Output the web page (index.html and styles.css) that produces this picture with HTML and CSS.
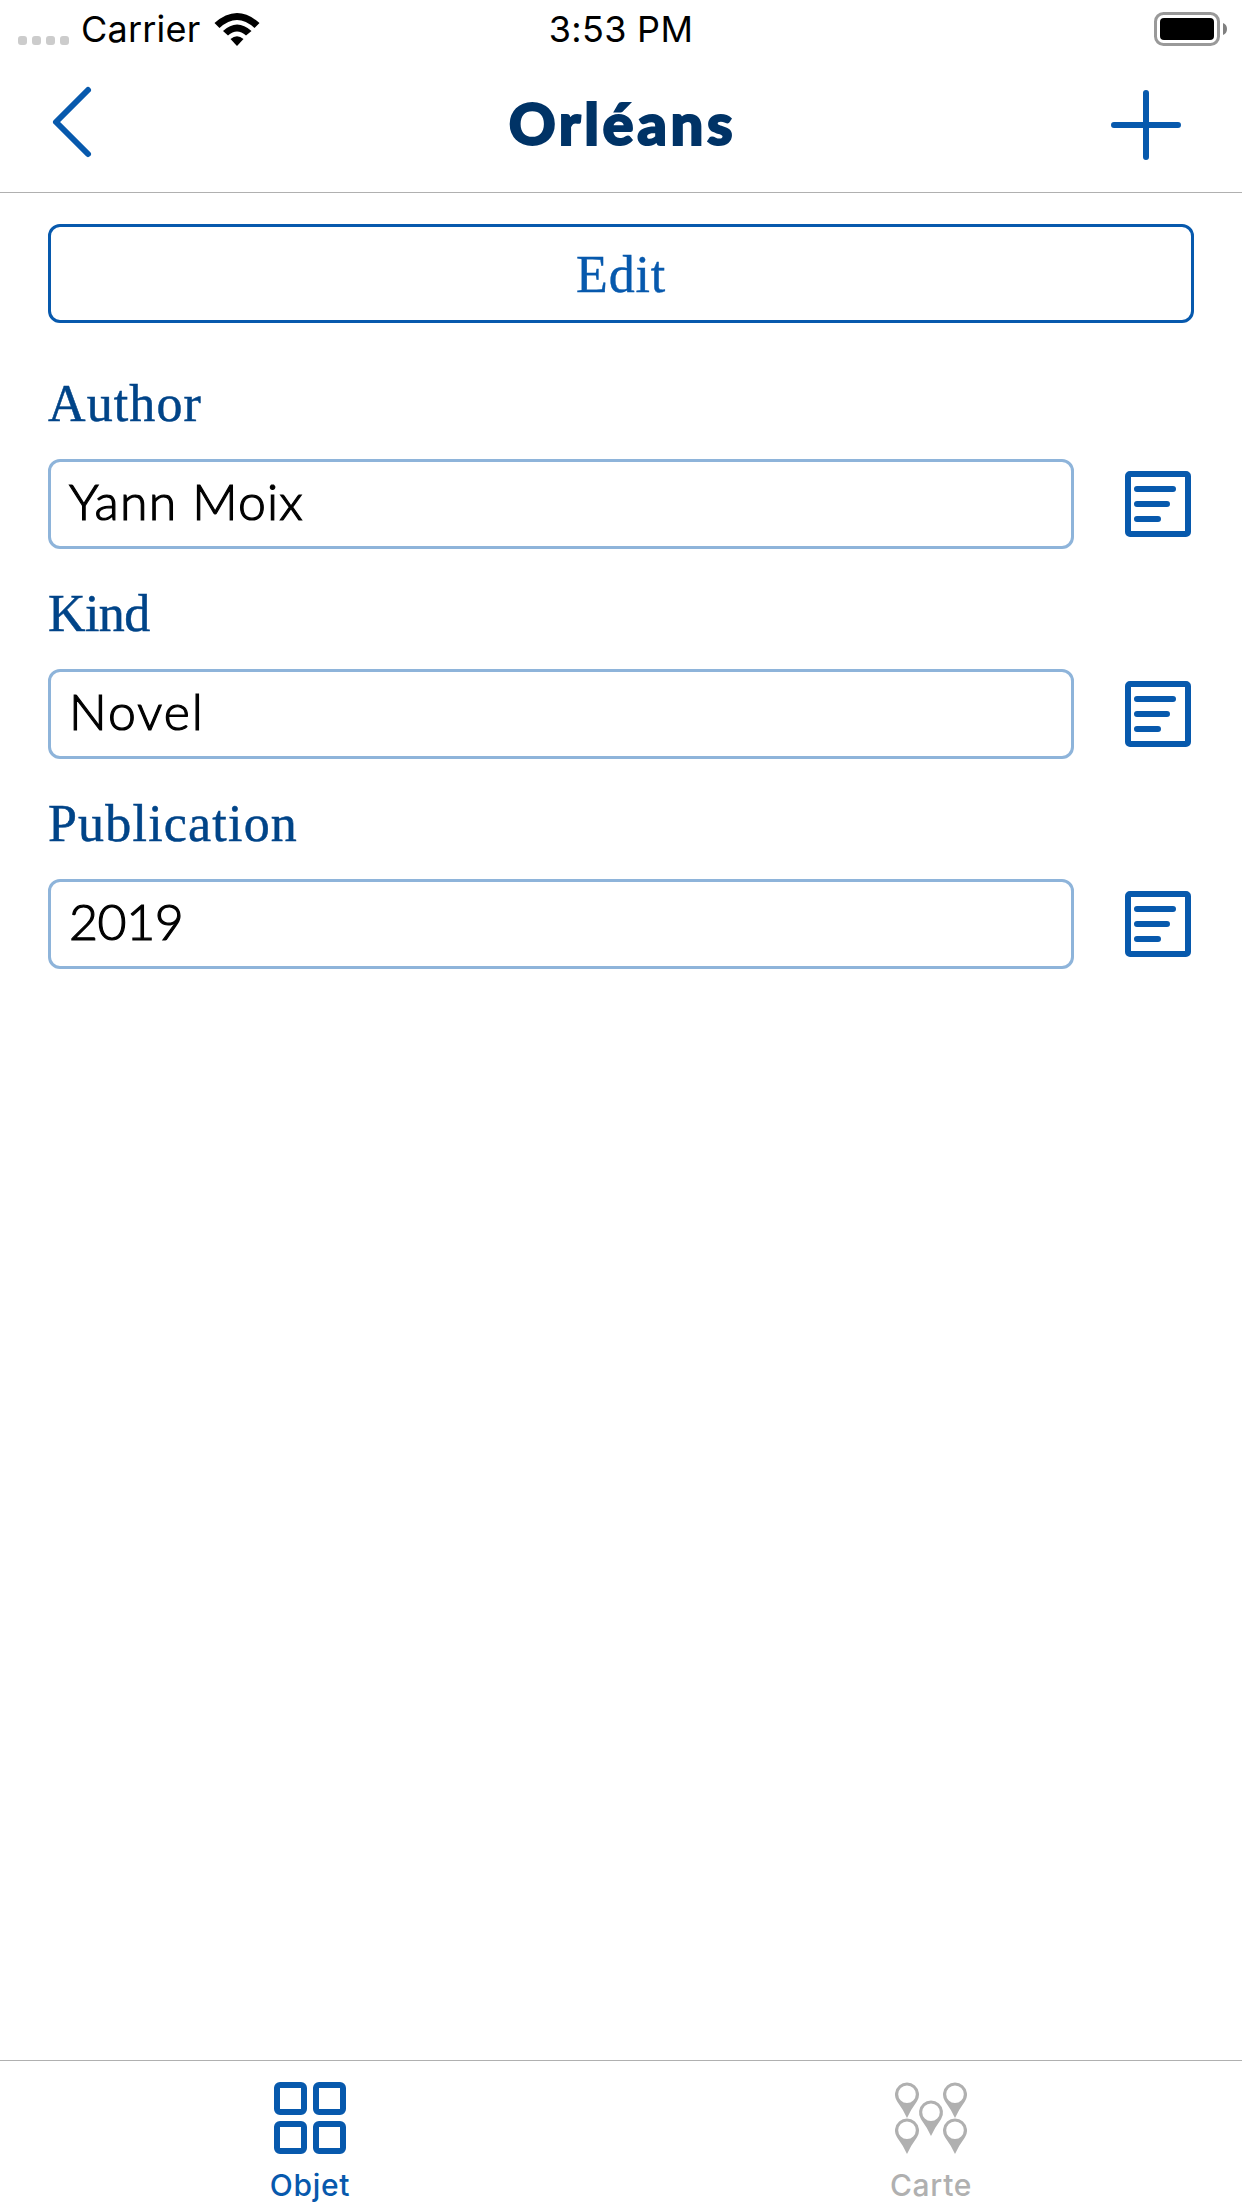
FILE: index.html
```html
<!DOCTYPE html>
<html lang="en">
<head>
<meta charset="utf-8">
<title>Orléans</title>
<link rel="stylesheet" href="styles.css">
</head>
<body>
<div class="screen">
  <div class="status">
    <div class="status-left">
      <div class="dots"><i></i><i></i><i></i><i></i></div>
      <span class="carrier">Carrier</span>
      <svg class="wifi" width="46" height="34" viewBox="0 0 46 34">
        <path d="M0.5 10Q23-10 45.5 10L40.5 15Q23-1 5.5 15Z"/>
        <path d="M9 18Q23 5 37.5 18L32 22.5Q23 14.500 14 22.500Z"/>
        <path d="M16.500 26Q23 20.500 29.500 26L23 33Z"/>
      </svg>
    </div>
    <span class="time">3:53 PM</span>
    <div class="status-right">
      <svg width="74" height="34" viewBox="0 0 74 34">
        <rect x="1.500" y="1.500" width="63" height="31" rx="8" fill="none" stroke="#999" stroke-width="3"/>
        <rect x="6" y="6" width="54" height="22" rx="4"/>
        <path d="M69 11Q73 12.500 73 17T69 23Z" fill="#808080"/>
      </svg>
    </div>
  </div>
  <header class="nav">
    <svg class="stroke" width="70" height="76" viewBox="0 0 70 76"><path d="M40 6L8 38L40 70"/></svg>
    <h1 class="title">Orléans</h1>
    <svg class="stroke plus" width="70" height="70" viewBox="0 0 70 70"><path d="M35 3V67M3 35H67"/></svg>
  </header>
  <main class="content">
    <button class="edit">Edit</button>
    <section class="group">
      <div class="label author">Author</div>
      <div class="row">
        <div class="field name">Yann Moix</div>
        <svg class="note" width="66" height="66" viewBox="0 0 66 66"><rect x="3" y="3" width="60" height="60" rx="2"/><path d="M12 18H48M12 33H42M12 48H33"/></svg>
      </div>
    </section>
    <section class="group">
      <div class="label kind">Kind</div>
      <div class="row">
        <div class="field novel">Novel</div>
        <svg class="note" width="66" height="66" viewBox="0 0 66 66"><rect x="3" y="3" width="60" height="60" rx="2"/><path d="M12 18H48M12 33H42M12 48H33"/></svg>
      </div>
    </section>
    <section class="group">
      <div class="label publication">Publication</div>
      <div class="row">
        <div class="field year">2019</div>
        <svg class="note" width="66" height="66" viewBox="0 0 66 66"><rect x="3" y="3" width="60" height="60" rx="2"/><path d="M12 18H48M12 33H42M12 48H33"/></svg>
      </div>
    </section>
  </main>
  <nav class="tabs">
    <div class="tab active">
      <div class="grid"><i></i><i></i><i></i><i></i></div>
      <span>Objet</span>
    </div>
    <div class="tab">
      <svg class="pins" width="72" height="72" viewBox="0 0 72 72">
        <defs><path id="pin" fill-rule="evenodd" d="M12 36Q8.500 28 2 19.200A12 12 0 1 1 22 19.200Q15.500 28 12 36ZM12 3.400A8.800 8.800 0 1 0 12 21A8.800 8.800 0 1 0 12 3.400Z"/></defs>
        <use href="#pin"/><use href="#pin" x="48"/><use href="#pin" x="24" y="18"/><use href="#pin" y="36"/><use href="#pin" x="48" y="36"/>
      </svg>
      <span>Carte</span>
    </div>
  </nav>
</div>
</body>
</html>
```
FILE: styles.css
```css
* { box-sizing: border-box; }
body { margin: 0; background: #fff; }
.screen { width: 1242px; height: 2208px; display: flex; flex-direction: column; }

.status { height: 60px; display: grid; grid-template-columns: 1fr auto 1fr; font: 36px/58px Inter, sans-serif; color: #000; }
.status-left { display: flex; padding-left: 18px; }
.dots { display: flex; gap: 5px; padding-top: 36px; }
.dots i { width: 9px; height: 9px; border-radius: 3px; background: #ccc; }
.carrier { width: 131px; margin-left: 12px; letter-spacing: 0.2px; }
.wifi { margin-top: 13px; margin-left: 2px; }
.time { letter-spacing: 0.3px; }
.status-right { display: flex; justify-content: flex-end; padding: 12px 14px 0 0; }

.nav { height: 133px; display: grid; grid-template-columns: 1fr auto 1fr; align-items: start; padding: 24px 48px 0; border-bottom: 1px solid #b0b0b0; }
.stroke { fill: none; stroke: #0759ad; stroke-width: 6; stroke-linecap: round; stroke-linejoin: round; }
.plus { justify-self: end; margin: 6px 13px 0 0; }
.title { margin: 0; padding-left: 3px; font: 900 58px/78px Lato, sans-serif; letter-spacing: 3.6px; color: #036; -webkit-text-stroke: 2px #036; }

.content { flex: 1; padding: 31px 48px 0; }
.edit { display: block; width: 100%; height: 99px; padding: 3px 0 0; border: 3px solid #0759ad; border-radius: 12px; background: none; font: 52px/90px "Liberation Serif", serif; letter-spacing: 0.8px; color: #0759ad; -webkit-text-stroke: 0.4px #0759ad; }
.group { height: 210px; display: flex; flex-direction: column; justify-content: flex-end; }
.edit + .group { height: 226px; }
.label { height: 70px; margin-bottom: 17px; font: 52px/64px "Liberation Serif", serif; color: #048; -webkit-text-stroke: 0.5px #048; }
.author { letter-spacing: 1.1px; }
.kind { letter-spacing: -0.6px; }
.publication { letter-spacing: 1.2px; }
.row { display: flex; align-items: center; gap: 51px; height: 90px; }
.field { width: 1026px; height: 90px; padding-left: 18px; border: 3px solid #8eb4da; border-radius: 12px; font: 300 50px/78px Lato, sans-serif; letter-spacing: 1.2px; color: #000; -webkit-text-stroke: 1.2px #000; }
.novel { letter-spacing: 2px; }
.year { letter-spacing: -0.4px; }
.note { fill: none; stroke: #0759ad; stroke-width: 6; stroke-linecap: round; }

.tabs { height: 148px; display: flex; border-top: 1px solid #b0b0b0; color: #b0b0b0; font: 500 30px/36px Inter, sans-serif; letter-spacing: 0.7px; }
.tab { flex: 1; display: flex; flex-direction: column; align-items: center; padding: 21px 1px 0 0; gap: 13px; }
.active { color: #0759ad; }
.grid { width: 72px; height: 72px; display: grid; grid-template-columns: 33px 33px; grid-template-rows: 33px 33px; gap: 6px; }
.grid i { border: 6px solid #0759ad; border-radius: 6px; }
.pins { fill: #b0b0b0; }
```
